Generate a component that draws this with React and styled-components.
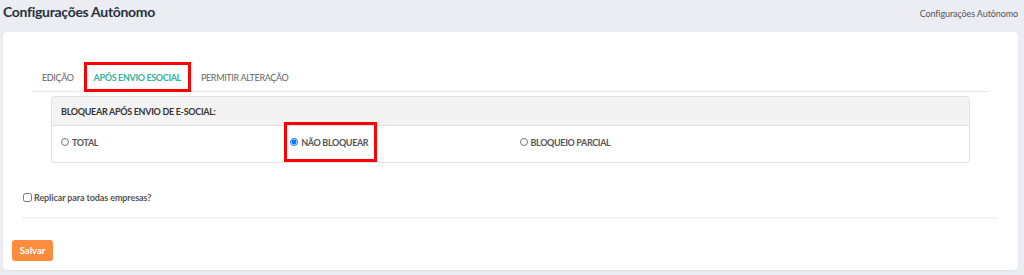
import React from "react";
import styled, { createGlobalStyle } from "styled-components";

const Global = createGlobalStyle`
  html, body { margin: 0; padding: 0; }
  body {
    background: #ebedf2;
    font-family: Lato, "Open Sans", sans-serif;
    height: 275px;
    overflow: hidden;
  }
`;

const Page = styled.div`
  display: flex;
  flex-direction: column;
  padding: 0 6px 5px 3px;
`;

const TopBar = styled.div`
  height: 32px;
  display: flex;
  justify-content: space-between;
  align-items: flex-start;
`;

const Title = styled.h1`
  margin: 4px 0 0 0;
  font-size: 14px;
  font-weight: 700;
  letter-spacing: -0.3px;
  color: #27303d;
  line-height: 16px;
`;

const Crumb = styled.span`
  margin-top: 8px;
  font-size: 9px;
  letter-spacing: -0.1px;
  color: #555;
  line-height: 11px;
`;

const Card = styled.div`
  background: #fff;
  border-radius: 4px;
  box-shadow: 0 1px 2px rgba(0, 0, 0, 0.06);
  height: 238px;
  display: flex;
  flex-direction: column;
`;

const Body = styled.div`
  padding: 30px 20px 0 19px;
  display: flex;
  flex-direction: column;
`;

const TabList = styled.div`
  margin: 0 10px;
  display: flex;
  border-bottom: 1px solid #e6e6e6;
  height: 29px;
`;

const Tab = styled.div`
  height: 30px;
  padding: 0 10px;
  display: flex;
  align-items: center;
  font-size: 9px;
  letter-spacing: -0.35px;
  font-weight: ${(p) => (p.$active ? 700 : 400)};
  color: ${(p) => (p.$active ? "#33b39b" : "#666")};
  box-shadow: ${(p) => (p.$active ? "inset 0 0 0 3px #f00" : "none")};
  box-sizing: border-box;
  white-space: nowrap;
`;

const Panel = styled.div`
  margin: 4px 28px 0 29px;
  border: 1px solid #e2e2e2;
  border-radius: 3px;
`;

const PanelHead = styled.div`
  height: 28px;
  background: #f3f3f3;
  border-bottom: 1px solid #e0e0e0;
  display: flex;
  align-items: center;
  padding-left: 9px;
  font-size: 9px;
  font-weight: 700;
  letter-spacing: -0.3px;
  color: #333;
  border-radius: 3px 3px 0 0;
`;

const OptionRow = styled.div`
  height: 36px;
  box-sizing: border-box;
  padding-bottom: 4px;
  display: grid;
  grid-template-columns: repeat(4, 1fr);
  align-items: center;
`;

const OptionCell = styled.div`
  padding: 0 9px;
  display: flex;
  align-items: center;
`;

const OptionLabel = styled.label`
  position: relative;
  display: inline-flex;
  align-items: center;
  gap: 2px;
  font-size: 9px;
  font-weight: 700;
  letter-spacing: -0.35px;
  color: #555;
  ${(p) =>
    p.$marked &&
    `
    &::after {
      content: "";
      position: absolute;
      left: -6px;
      right: -9px;
      top: -15px;
      bottom: -14px;
      border: 3px solid #f00;
      pointer-events: none;
    }
  `}
`;

const Radio = styled.input.attrs({ type: "radio" })`
  width: 8px;
  height: 8px;
  margin: 0 1px 0 0;
`;

const CheckRow = styled.label`
  margin: 29px 0 0 1px;
  display: flex;
  align-items: center;
  gap: 2px;
  font-size: 9px;
  font-weight: 700;
  letter-spacing: -0.1px;
  color: #555;
`;

const Check = styled.input.attrs({ type: "checkbox" })`
  width: 9px;
  height: 9px;
  margin: 0;
`;

const Divider = styled.div`
  margin-top: 14px;
  height: 2px;
  background: #f4f4f5;
`;

const Footer = styled.div`
  display: flex;
  padding: 21px 0 0 9px;
`;

const SaveButton = styled.button`
  width: 41px;
  height: 21px;
  border: none;
  border-radius: 3px;
  background: #fd8c3c;
  color: #fff;
  font-family: inherit;
  font-size: 9.5px;
  font-weight: 700;
  padding: 0;
`;

export default function App() {
  const [value, setValue] = React.useState("nao");
  const options = [
    { id: "total", label: "TOTAL" },
    { id: "nao", label: "NÃO BLOQUEAR", marked: true },
    { id: "parcial", label: "BLOQUEIO PARCIAL" },
  ];
  return (
    <>
      <Global />
      <Page>
        <TopBar>
          <Title>Configurações Autônomo</Title>
          <Crumb>Configurações Autônomo</Crumb>
        </TopBar>
        <Card>
          <Body>
            <TabList>
              <Tab>EDIÇÃO</Tab>
              <Tab $active>APÓS ENVIO ESOCIAL</Tab>
              <Tab>PERMITIR ALTERAÇÃO</Tab>
            </TabList>
            <Panel>
              <PanelHead>BLOQUEAR APÓS ENVIO DE E-SOCIAL:</PanelHead>
              <OptionRow>
                {options.map((o) => (
                  <OptionCell key={o.id}>
                    <OptionLabel $marked={o.marked}>
                      <Radio
                        name="bloqueio"
                        checked={value === o.id}
                        onChange={() => setValue(o.id)}
                      />
                      {o.label}
                    </OptionLabel>
                  </OptionCell>
                ))}
              </OptionRow>
            </Panel>
            <CheckRow>
              <Check />
              Replicar para todas empresas?
            </CheckRow>
            <Divider />
          </Body>
          <Footer>
            <SaveButton>Salvar</SaveButton>
          </Footer>
        </Card>
      </Page>
    </>
  );
}
